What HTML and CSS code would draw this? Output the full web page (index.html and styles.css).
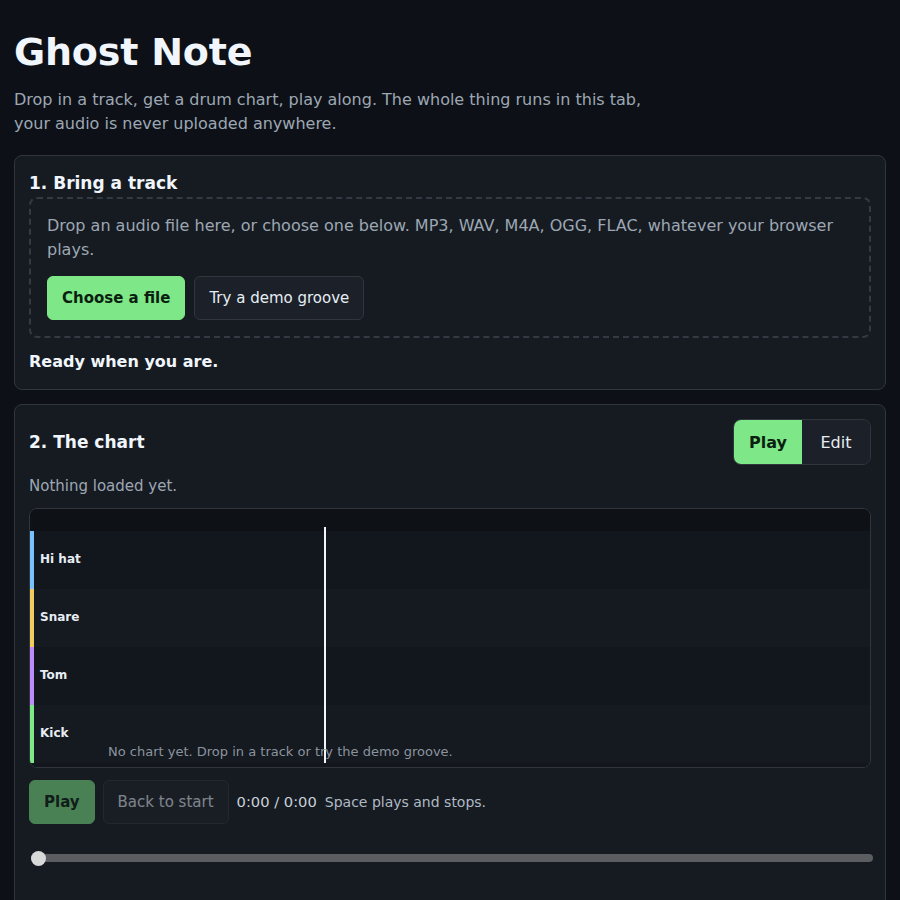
FILE: index.html
```html
<!DOCTYPE html>
<html lang="en">
<head>
<meta charset="utf-8">
<title>Ghost Note</title>
<link rel="stylesheet" href="styles.css">
</head>
<body>
<main class="page">
  <header class="intro">
    <h1 class="title">Ghost Note</h1>
    <p class="lede">Drop in a track, get a drum chart, play along. The whole thing runs in this tab, your audio is never uploaded anywhere.</p>
  </header>

  <section class="card">
    <h2 class="card-title">1. Bring a track</h2>
    <div class="dropzone">
      <p class="drop-text">Drop an audio file here, or choose one below. MP3, WAV, M4A, OGG, FLAC, whatever your browser plays.</p>
      <div class="btn-row">
        <button class="btn btn-primary">Choose a file</button>
        <button class="btn btn-secondary">Try a demo groove</button>
      </div>
    </div>
    <p class="status">Ready when you are.</p>
  </section>

  <section class="card card-chart">
    <div class="chart-head">
      <h2 class="card-title">2. The chart</h2>
      <div class="toggle">
        <button class="toggle-btn is-active">Play</button>
        <button class="toggle-btn">Edit</button>
      </div>
    </div>
    <p class="muted">Nothing loaded yet.</p>
    <div class="chart">
      <div class="chart-top"></div>
      <div class="lane lane-hihat"><span class="lane-label">Hi hat</span></div>
      <div class="lane lane-snare"><span class="lane-label">Snare</span></div>
      <div class="lane lane-tom"><span class="lane-label">Tom</span></div>
      <div class="lane lane-kick"><span class="lane-label">Kick</span></div>
      <div class="chart-bottom"></div>
      <div class="playhead"></div>
      <div class="chart-empty">No chart yet. Drop in a track or try the demo groove.</div>
    </div>
    <div class="transport">
      <button class="btn btn-primary is-disabled">Play</button>
      <button class="btn btn-secondary is-disabled">Back to start</button>
      <span class="time">0:00 / 0:00</span>
      <span class="hint">Space plays and stops.</span>
    </div>
    <input class="seek" type="range" min="0" max="100" value="0">
  </section>
</main>
</body>
</html>
```

FILE: styles.css
```css
* { box-sizing: border-box; }

html, body {
  margin: 0;
  padding: 0;
  background: #0d1117;
}

body {
  font-family: "DejaVu Sans", "Liberation Sans", sans-serif;
  color: #e6edf3;
  font-size: 16px;
  line-height: 24px;
}

.page {
  padding: 24px 14px 0;
}

.title {
  margin: 0;
  font-size: 38px;
  line-height: 56px;
  font-weight: 700;
  color: #f0f6fc;
  letter-spacing: -0.2px;
}

.lede {
  margin: 8px 0 19px;
  max-width: 660px;
  color: #9da7b3;
}

.card {
  background: #161b22;
  border: 1px solid #30363d;
  border-radius: 8px;
  padding: 14px 14px 15px;
  margin-bottom: 14px;
}

.card-title {
  margin: 0 0 1px;
  font-size: 17px;
  line-height: 26px;
  font-weight: 700;
  color: #f0f6fc;
}

.dropzone {
  border: 2px dashed #343a43;
  border-radius: 8px;
  padding: 15px 16px 16px;
}

.drop-text {
  margin: 0 0 14px;
  color: #9da7b3;
}

.btn-row {
  display: flex;
  gap: 9px;
}

.btn {
  font-family: inherit;
  font-size: 15px;
  height: 44px;
  padding: 0 14px;
  border-radius: 6px;
  border: 1px solid transparent;
  cursor: pointer;
}

.btn-primary {
  background: #7ee787;
  border-color: #7ee787;
  color: #0b1f10;
  font-weight: 700;
}

.btn-secondary {
  background: #1c2129;
  border-color: #30363d;
  color: #e6edf3;
}

.btn.is-disabled {
  opacity: 0.5;
  cursor: default;
}

.status {
  margin: 12px 0 0;
  font-weight: 700;
  color: #f0f6fc;
}

.card-chart {
  padding-bottom: 80px;
}

.chart-head {
  display: flex;
  align-items: center;
  justify-content: space-between;
}

.chart-head .card-title {
  margin: 0;
}

.toggle {
  display: flex;
  border: 1px solid #30363d;
  border-radius: 8px;
  overflow: hidden;
}

.toggle-btn {
  font-family: inherit;
  font-size: 16px;
  height: 44px;
  width: 68px;
  border: 0;
  background: #1c2129;
  color: #e6edf3;
  padding: 0;
}

.toggle-btn.is-active {
  background: #7ee787;
  color: #0b1f10;
  font-weight: 700;
}

.muted {
  margin: 10px 0 11px;
  font-size: 15px;
  line-height: 22px;
  color: #9da7b3;
}

.chart {
  position: relative;
  background: #0e1217;
  border: 1px solid #30363d;
  border-radius: 8px;
  overflow: hidden;
  display: flex;
  flex-direction: column;
}

.chart-top {
  height: 22px;
  background: #0e1217;
}

.chart-bottom {
  height: 4px;
  background: #13171d;
}

.lane {
  height: 58px;
  display: flex;
  align-items: center;
  border-left: 4px solid transparent;
  padding-left: 6px;
}

.lane-hihat { border-left-color: #79c0ff; background: #12161d; }
.lane-snare { border-left-color: #f2cc60; background: #151920; }
.lane-tom   { border-left-color: #bc8cff; background: #12161d; }
.lane-kick  { border-left-color: #7ee787; background: #151920; }

.lane-label {
  font-size: 12px;
  line-height: 16px;
  font-weight: 700;
  color: #e6edf3;
  margin-top: -2px;
}

.playhead {
  position: absolute;
  left: 294px;
  top: 18px;
  bottom: 4px;
  width: 2px;
  background: #f0f6fc;
}

.chart-empty {
  position: absolute;
  left: 78px;
  bottom: 6px;
  font-size: 13px;
  line-height: 18px;
  color: #8b949e;
}

.transport {
  display: flex;
  align-items: center;
  gap: 8px;
  margin-top: 12px;
  font-size: 14px;
}

.time {
  font-size: 14.7px;
  color: #c9d1d9;
}

.hint {
  color: #b1bac4;
}

.seek {
  -webkit-appearance: none;
  appearance: none;
  display: block;
  width: 100%;
  margin: 26px 0 0 2px;
  height: 16px;
  background: transparent;
}

.seek::-webkit-slider-runnable-track {
  height: 8px;
  background: #5b5d61;
  border-radius: 4px;
}

.seek::-webkit-slider-thumb {
  -webkit-appearance: none;
  appearance: none;
  width: 15px;
  height: 15px;
  border-radius: 50%;
  background: #d8d8d8;
  margin-top: -3.5px;
  border: 0;
}
```
